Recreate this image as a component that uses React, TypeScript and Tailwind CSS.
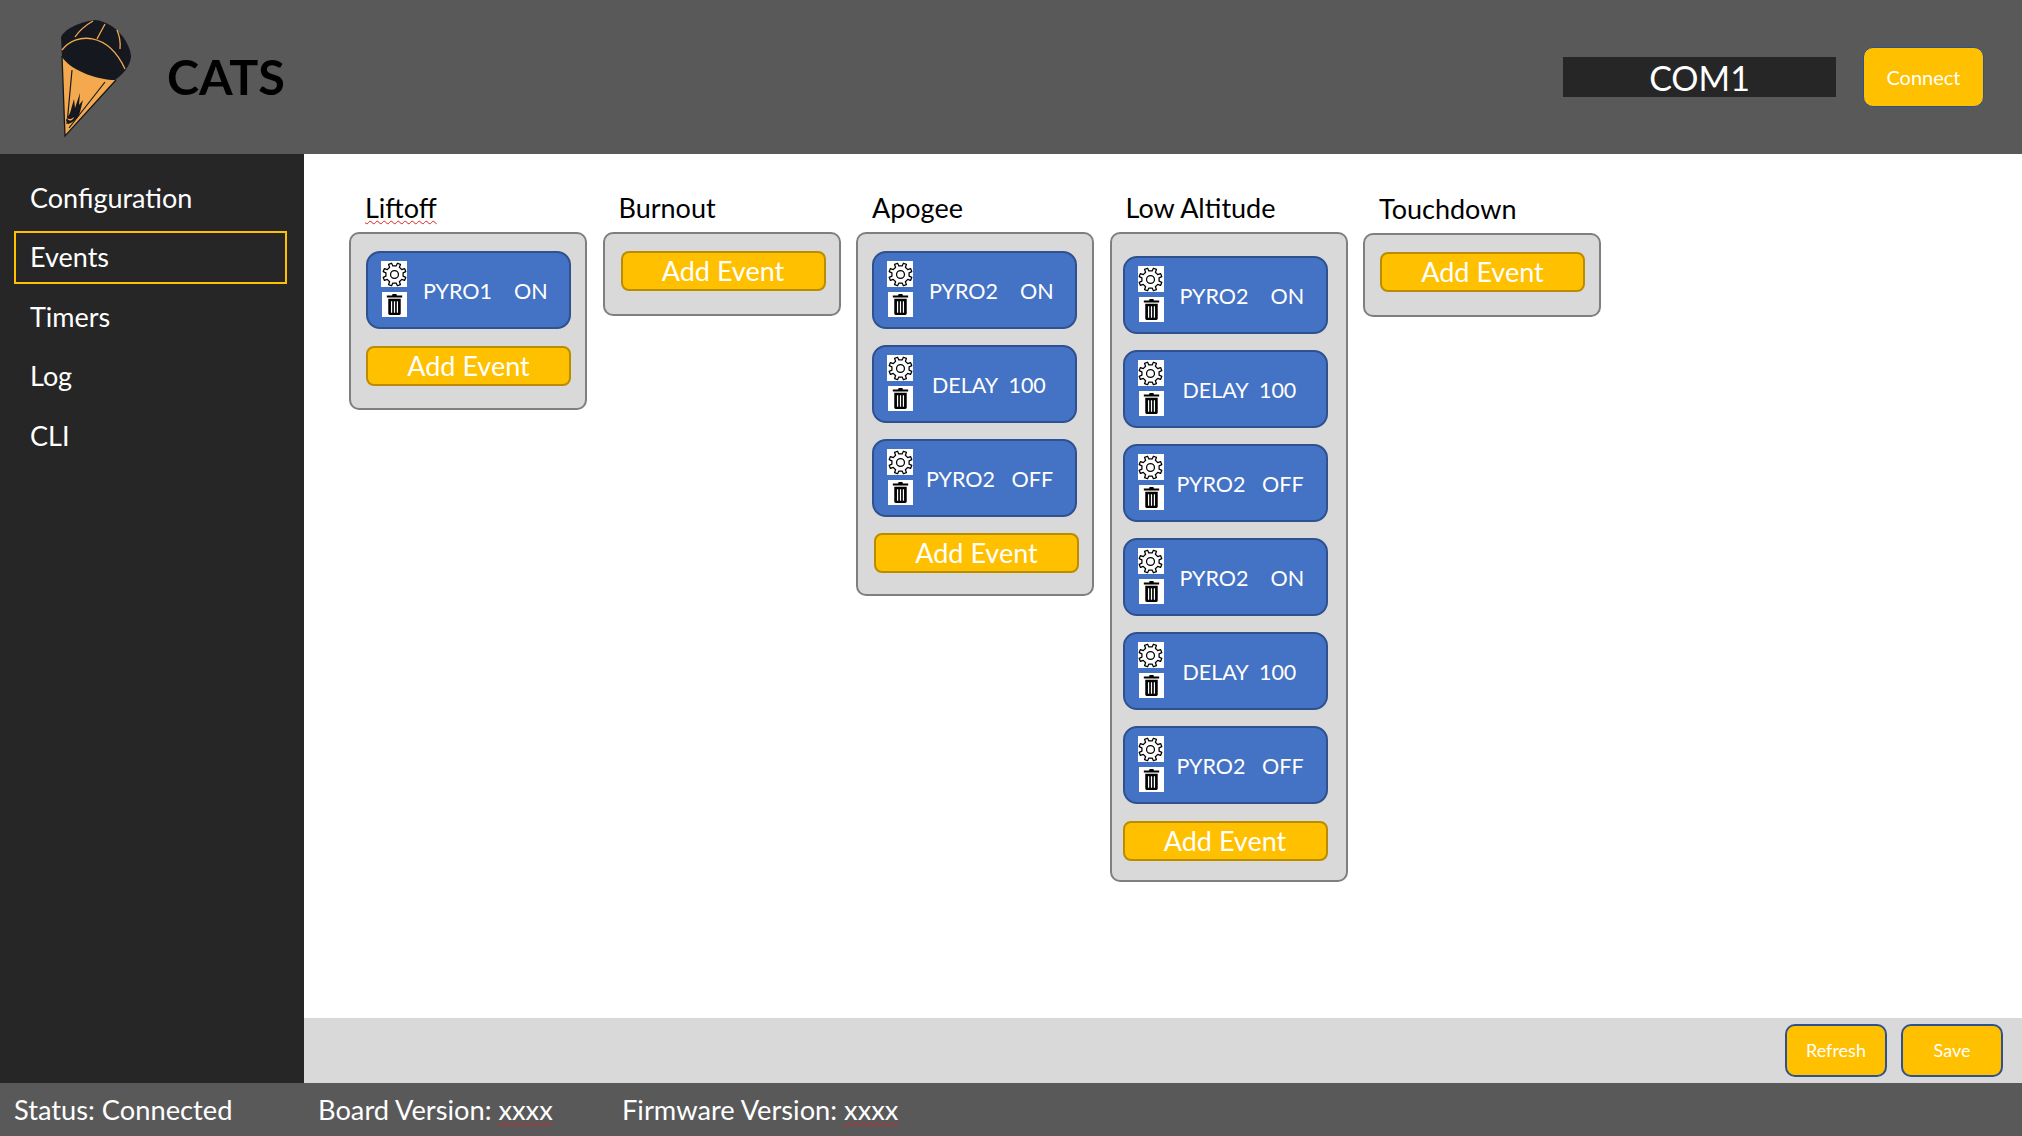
const font = "font-['Lato','Open_Sans',sans-serif]";

type Row = { label: string; kind: 'on' | 'delay' | 'off' };

const rowPad = { on: 'pl-[55px]', delay: 'pl-[58px]', off: 'pl-[52px]' };

// 8 tooth outline for the settings icon
const gearPath = Array.from({ length: 8 }, (_, i) => {
  const a = (i * Math.PI) / 4 - Math.PI / 8;
  const pt = (r: number, d: number) =>
    `${(12 + r * Math.cos(a + d)).toFixed(2)} ${(12 + r * Math.sin(a + d)).toFixed(2)}`;
  return `${i === 0 ? 'M' : 'L'}${pt(8.4, -0.2)} L${pt(11.2, -0.14)} L${pt(11.2, 0.14)} L${pt(8.4, 0.2)}`;
}).join(' ') + ' Z';

function Gear() {
  return (
    <div className="flex h-[26px] w-[26px] items-center justify-center bg-white">
      <svg viewBox="0 0 24 24" className="h-[25px] w-[25px]" fill="none" stroke="#000" strokeWidth="1.200" strokeLinejoin="round">
        <path d={gearPath} />
        <circle cx="12" cy="12" r="3.800" />
      </svg>
    </div>
  );
}

function Trash() {
  return (
    <div className="ml-[1px] flex h-[25px] w-[25px] items-center justify-center bg-white">
      <svg viewBox="0 0 24 24" className="h-[23px] w-[23px]" fill="#000">
        <path d="M10 1h4l.5 1.500H20v2.200H4V2.500h5.500z" />
        <path fillRule="evenodd" d="M5.500 6h13v15.500a1.500 1.500 0 0 1-1.500 1.500H7a1.500 1.500 0 0 1-1.500-1.500zM8.300 8.500v12h1.300v-12zM11.350 8.500v12h1.300v-12zM14.400 8.500v12h1.300v-12z" />
      </svg>
    </div>
  );
}

function EventRow({ label, kind }: Row) {
  return (
    <div className="relative flex h-[78px] w-[205px] items-center rounded-[14px] border-2 border-[#2f528f] bg-[#4472c4]">
      <div className="absolute left-[13px] top-[8px] flex flex-col gap-[5px]">
        <Gear />
        <Trash />
      </div>
      <span className={`${rowPad[kind]} mt-[3px] whitespace-pre text-[21.500px] text-white`}>{label}</span>
    </div>
  );
}

function AddEvent({ className = '' }: { className?: string }) {
  return (
    <div className={`flex h-[40px] w-[205px] items-center justify-center rounded-[8px] border-2 border-[#bc8c00] bg-[#ffc000] text-[27px] text-white ${className}`}>
      Add Event
    </div>
  );
}

function Column({ title, rows, addClass, panelClass, titleClass }: {
  title: string;
  rows: Row[];
  addClass?: string;
  panelClass: string;
  titleClass?: string;
}) {
  return (
    <div className="flex w-[238px] flex-col">
      <div className={`h-[47px] whitespace-nowrap pl-[16px] text-[27px] leading-[46px] text-black ${titleClass ?? ''}`}>{title}</div>
      <div className={`flex flex-col rounded-[10px] border-2 border-[#7f7f7f] bg-[#d9d9d9] ${panelClass}`}>
        {rows.length > 0 && (
          <div className="flex flex-col gap-[16px]">
            {rows.map((r, i) => <EventRow key={i} {...r} />)}
          </div>
        )}
        <AddEvent className={addClass} />
      </div>
    </div>
  );
}

const pyroOn: Row = { label: 'PYRO2    ON', kind: 'on' };
const delay: Row = { label: 'DELAY  100', kind: 'delay' };
const pyroOff: Row = { label: 'PYRO2   OFF', kind: 'off' };

function Logo() {
  return (
    <svg viewBox="50 10 90 130" className="h-[130px] w-[90px]">
      {/* shrouds and canopy */}
      <path d="M62 54 L65 134 L116 78 C98 76 72 68 62 54 Z" fill="#f4a94e" />
      <path d="M62 54 L65 134 L116 78" fill="none" stroke="#15191f" strokeWidth="1.300" />
      <path d="M61 35 C64 28 78 20 95 18 C117 20 131 43 131 55 C130 65 122 73 115 78 C100 78 72 70 62 55 Z" fill="#15191f" />
      <path d="M62 48 C76 30 108 30 125 67 M75 35 C79 29 86 23 93 19 M97 37 C100 31 103 26 105 22 M117 28 C120 35 120.500 42 120 47" fill="none" stroke="#f4a94e" strokeWidth="1.300" />
      <path d="M72 68 L67 122 M105 80 L69 126" stroke="#15191f" strokeWidth="1.200" />
      {/* burst at the bottom of the shrouds */}
      <path d="M66 118 L70 111 L74 97 L75 106 L80 91 L79 103 L83 98 L80 110 C78 116 74 120 68 122 Z" fill="#15191f" />
      <path d="M67 116 C69 118 72 117 74 115 C73 119 69 120 67 116 Z" fill="#f4a94e" />
    </svg>
  );
}

function Squiggle({ children }: { children: string }) {
  return <span className="underline decoration-[#e02020] decoration-wavy decoration-1 underline-offset-2">{children}</span>;
}

export default function App() {
  const nav = ['Configuration', 'Events', 'Timers', 'Log', 'CLI'];

  return (
    <div className={`${font} flex h-[1136px] w-[2022px] flex-col overflow-hidden bg-white`}>
      <header className="flex h-[154px] shrink-0 items-center bg-[#595959]">
        <div className="ml-[50px] w-[90px]"><Logo /></div>
        <div className="mb-[2px] ml-[27px] text-[48.500px] font-bold text-black">CATS</div>
        <div className="ml-auto flex h-[40px] w-[273px] items-center justify-center bg-[#262626] text-[34px] text-white">COM1</div>
        <div className="ml-[27px] mr-[38px] flex h-[60px] w-[121px] items-center justify-center rounded-[10px] border border-[#2f528f] bg-[#ffc000] text-[20px] text-white">Connect</div>
      </header>

      <div className="flex min-h-0 flex-1">
        <aside className="w-[304px] shrink-0 bg-[#262626] pt-[17.500px] pl-[14px]">
          {nav.map((item) => (
            <div
              key={item}
              className={`flex h-[53px] w-[273px] items-center text-[27px] text-white mb-[6.500px] ${item === 'Events' ? 'border-2 border-[#ffc000] pl-[14px]' : 'pl-[16px]'}`}
            >
              {item}
            </div>
          ))}
        </aside>

        <main className="flex min-w-0 flex-1 flex-col">
          <div className="flex flex-1 gap-[15.500px] pl-[45px] pt-[31px]">
            <Column title="Liftoff" rows={[{ label: 'PYRO1    ON', kind: 'on' }]} panelClass="h-[178px] px-[15px] pt-[17px] gap-[17px]" titleClass="underline decoration-[#e02020] decoration-wavy decoration-1 underline-offset-2" />
            <Column title="Burnout" rows={[]} panelClass="h-[84px] px-[16px] pt-[17px]" />
            <Column title="Apogee" rows={[pyroOn, delay, pyroOff]} panelClass="h-[364px] px-[14px] pt-[17px] gap-[16px]" addClass="ml-[2px]" />
            <Column title="Low Altitude" rows={[pyroOn, delay, pyroOff, pyroOn, delay, pyroOff]} panelClass="h-[650px] px-[11px] pt-[22px] gap-[17px]" />
            <Column title="Touchdown" rows={[]} panelClass="h-[84px] px-[15px] pt-[17px]" titleClass="mt-[1px]" />
          </div>
          <div className="flex h-[65px] shrink-0 items-center justify-end gap-[14px] bg-[#d9d9d9] pr-[19px]">
            {['Refresh', 'Save'].map((b) => (
              <div key={b} className="flex h-[53px] w-[102px] items-center justify-center rounded-[10px] border-2 border-[#2f528f] bg-[#ffc000] text-[18px] text-white">{b}</div>
            ))}
          </div>
        </main>
      </div>

      <footer className="flex h-[53px] shrink-0 items-center bg-[#595959] pl-[14px] pt-[2px] text-[27.250px] text-white">
        <span className="w-[304px]">Status: Connected</span>
        <span className="w-[304px]">Board Version: <Squiggle>xxxx</Squiggle></span>
        <span>Firmware Version: <Squiggle>xxxx</Squiggle></span>
      </footer>
    </div>
  );
}
